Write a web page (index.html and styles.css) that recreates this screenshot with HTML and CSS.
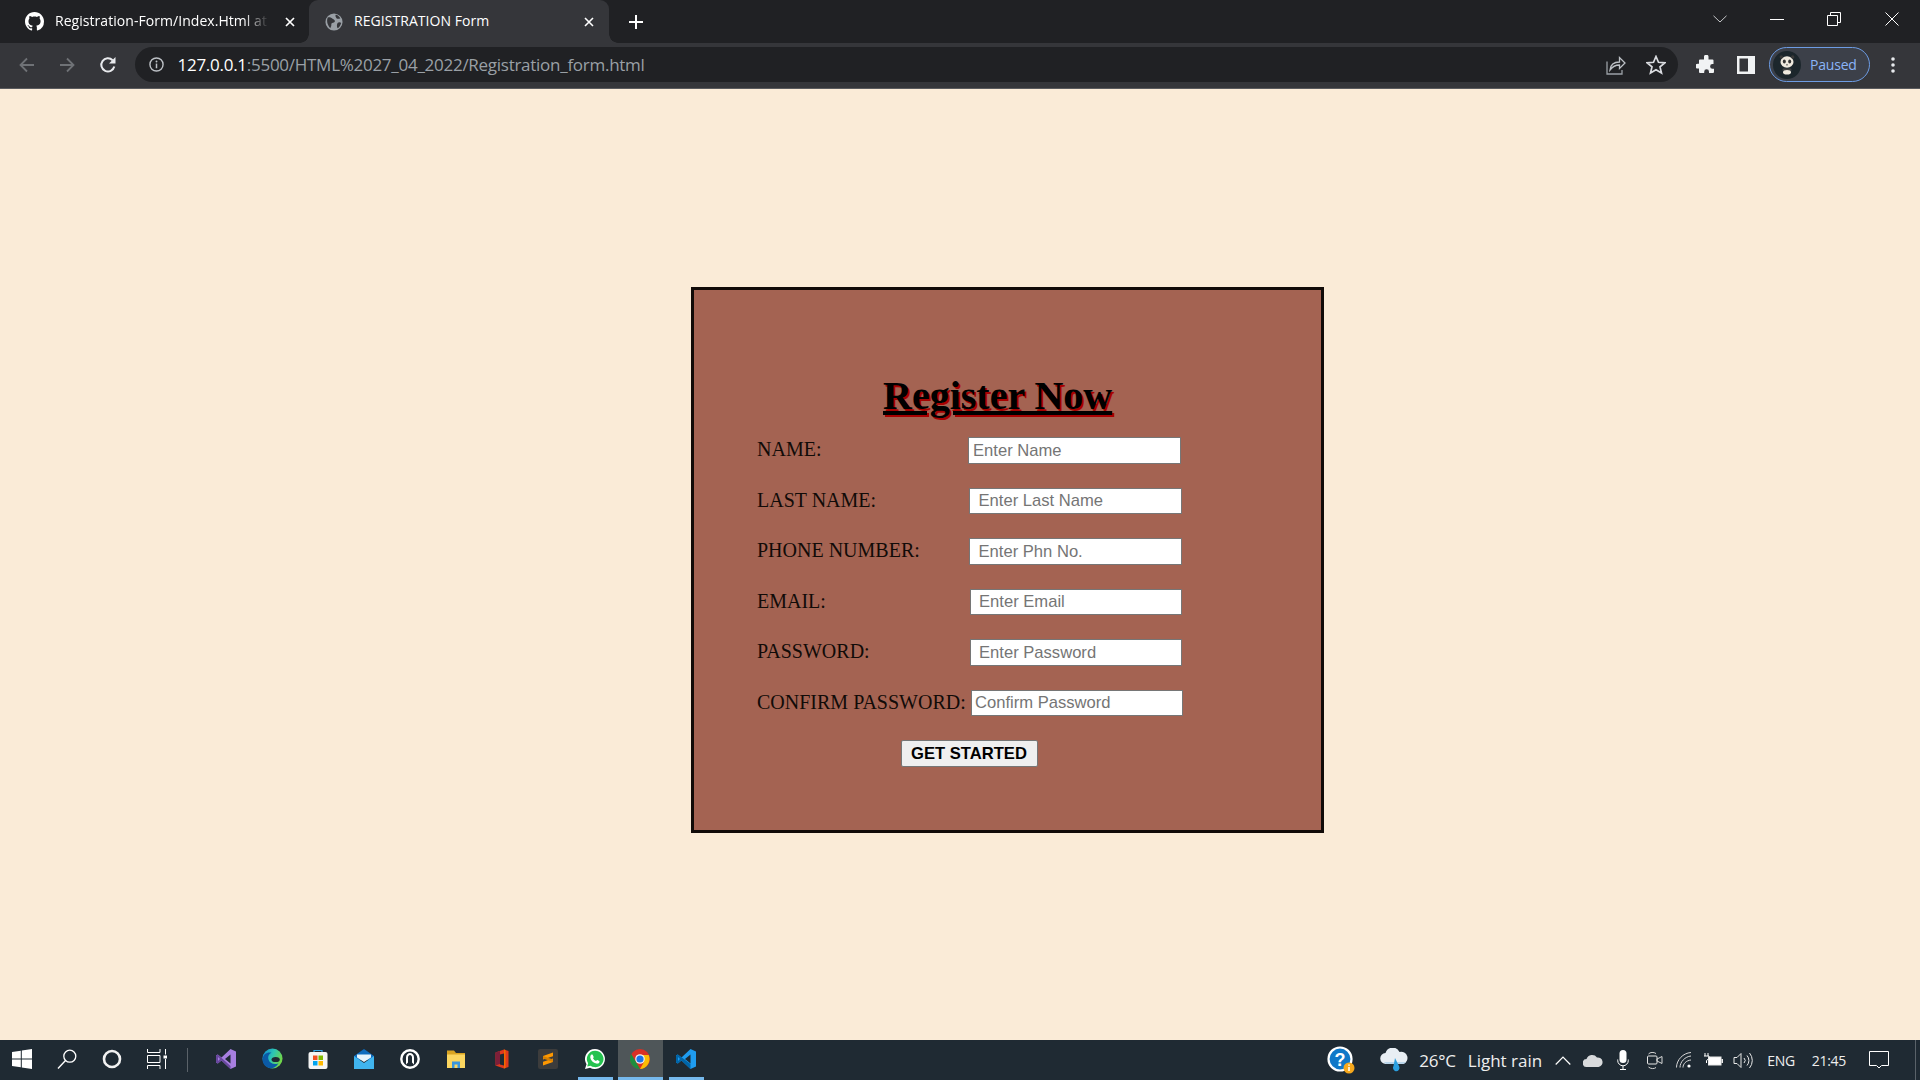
FILE: index.html
```html
<!DOCTYPE html>
<html lang="en">
<head>
<meta charset="utf-8">
<title>REGISTRATION Form</title>
<link rel="stylesheet" href="styles.css">
</head>
<body>
<header class="chrome">
  <div class="tabstrip">
    <div class="tab tab-inactive">
      <svg class="fav" viewBox="0 0 16 16"><path fill="#fff" d="M8 0C3.58 0 0 3.58 0 8c0 3.54 2.29 6.53 5.47 7.59.4.07.55-.17.55-.38 0-.19-.01-.82-.01-1.49-2.01.37-2.53-.49-2.69-.94-.09-.23-.48-.94-.82-1.13-.28-.15-.68-.52-.01-.53.63-.01 1.08.58 1.23.82.72 1.21 1.87.87 2.33.66.07-.52.28-.87.51-1.07-1.78-.2-3.64-.89-3.64-3.95 0-.87.31-1.59.82-2.15-.08-.2-.36-1.02.08-2.12 0 0 .67-.21 2.2.82.64-.18 1.32-.27 2-.27.68 0 1.36.09 2 .27 1.53-1.04 2.2-.82 2.2-.82.44 1.1.16 1.92.08 2.12.51.56.82 1.27.82 2.15 0 3.07-1.87 3.75-3.65 3.95.29.25.54.73.54 1.48 0 1.07-.01 1.93-.01 2.2 0 .21.15.46.55.38A8.013 8.013 0 0016 8c0-4.42-3.58-8-8-8z"/></svg>
      <span class="tab-title fade">Registration-Form/Index.Html at</span>
      <svg class="tab-x" viewBox="0 0 10 10"><path d="M1 1l8 8M9 1l-8 8" stroke="#fff" stroke-width="1.7"/></svg>
    </div>
    <div class="tab tab-active">
      <svg class="fav fav-globe" viewBox="0 0 20 20"><circle cx="10" cy="10" r="9.5" fill="#9aa0a6"/><path fill="#35363a" d="M3 5c2-1 4 0 5 1s3 1 3 3-2 2-3 2-1 2-1 3-1 2-1 3C4 15 1 10 3 5zM12 2c2 0 4 2 5 4-2 0-3 1-4 0s-2-3-1-4zM14 11c1-1 3-1 4 0-1 3-2 5-4 6-1-2-1-4 0-6z"/></svg>
      <span class="tab-title">REGISTRATION Form</span>
      <svg class="tab-x" viewBox="0 0 10 10"><path d="M1 1l8 8M9 1l-8 8" stroke="#fff" stroke-width="1.6"/></svg>
    </div>
    <svg class="newtab" viewBox="0 0 14 14"><path d="M7 0v14M0 7h14" stroke="#fff" stroke-width="2"/></svg>
    <div class="winctl">
      <svg class="win-chev" viewBox="0 0 14 8"><path d="M.5.8L7 7l6.500-6.200" fill="none" stroke="#c4c6c8" stroke-width="1"/></svg>
      <svg class="win-min" viewBox="0 0 14 14"><path d="M0 7.500h14" stroke="#fff" stroke-width="1"/></svg>
      <svg class="win-res" viewBox="0 0 14 14"><path d="M.5 3.500h10v10H.5zM3.500 3.500v-3h10v10h-3" fill="none" stroke="#fff" stroke-width="1"/></svg>
      <svg class="win-close" viewBox="0 0 14 14"><path d="M.5.500l13 13M13.500.500l-13 13" stroke="#fff" stroke-width="1"/></svg>
    </div>
  </div>
  <div class="toolbar">
    <svg class="tb nav" viewBox="0 0 18 18"><path d="M16 9H2.500M9 2.500L2.500 9 9 15.500" fill="none" stroke="#6f7276" stroke-width="1.800"/></svg>
    <svg class="tb nav" viewBox="0 0 18 18"><path d="M2 9h13.500M9 2.500L15.500 9 9 15.500" fill="none" stroke="#6f7276" stroke-width="1.800"/></svg>
    <svg class="tb nav" viewBox="0 0 18 18"><path d="M15.300 10.500A6.600 6.600 0 1 1 13.600 4.200" fill="none" stroke="#e8eaed" stroke-width="2"/><path d="M16.500 1v6.500H10z" fill="#e8eaed"/></svg>
    <div class="omnibox">
      <svg class="info" viewBox="0 0 16 16"><circle cx="8" cy="8" r="7" fill="none" stroke="#bdc1c6" stroke-width="1.500"/><path d="M8 7v5" stroke="#bdc1c6" stroke-width="1.600"/><circle cx="8" cy="4.800" r="1" fill="#bdc1c6"/></svg>
      <div class="url"><span class="url-host">127.0.0.1</span>:5500/HTML%2027_04_2022/Registration_form.html</div>
      <svg class="share" viewBox="0 0 20 20"><path d="M1 6.500v12.500h15v-4" fill="none" stroke="#9aa0a6" stroke-width="1.300"/><path d="M4 15c.5-5 4-8 9.500-8V2.500L19 8l-5.500 5.500V10C9.500 10 6.500 11.500 4 15z" fill="none" stroke="#bdc1c6" stroke-width="1.300"/></svg>
      <svg class="star" viewBox="0 0 20 20"><path d="M10 1.500l2.500 5.800 6.300.5-4.800 4.100 1.500 6.100-5.500-3.300-5.500 3.300 1.500-6.100L1.200 7.800l6.300-.5z" fill="none" stroke="#dadce0" stroke-width="1.700"/></svg>
    </div>
    <svg class="puzzle" viewBox="0 0 20 20"><path fill="#f1f3f4" d="M8 1.500a2.300 2.300 0 0 1 4.500 0V4.500H16.500a1 1 0 0 1 1 1V9h-1a2.400 2.400 0 0 0 0 4.800h1.500V17a1 1 0 0 1-1 1H13v-1.300a2.400 2.400 0 0 0-4.800 0V18H4a1 1 0 0 1-1-1v-3.500H1.800a2.400 2.400 0 0 1 0-4.800H3V5.500a1 1 0 0 1 1-1h4z"/></svg>
    <svg class="sidepanel" viewBox="0 0 18 18"><path fill-rule="evenodd" fill="#f1f3f4" d="M0 0h18v18H0zM2.500 2.500V15.500H11V2.500z"/></svg>
    <div class="profile">
      <svg class="avatar" viewBox="0 0 28 28"><circle cx="14" cy="14" r="14" fill="#1c262c"/><ellipse cx="14" cy="11" rx="6.500" ry="5.800" fill="#efe9df"/><circle cx="8.300" cy="6" r="1.700" fill="#3a3a3a"/><circle cx="19.700" cy="6" r="1.700" fill="#3a3a3a"/><ellipse cx="11.300" cy="10.500" rx="1.500" ry="1.900" fill="#333"/><ellipse cx="16.700" cy="10.500" rx="1.500" ry="1.900" fill="#333"/><ellipse cx="14" cy="13.800" rx=".9" ry=".6" fill="#333"/><path d="M10 17.500h8l.8 2h-9.600z" fill="#444"/><ellipse cx="14" cy="21.300" rx="4" ry="2.300" fill="#efe9df"/></svg>
      <span class="profile-label">Paused</span>
    </div>
    <svg class="kebab" viewBox="0 0 4 16"><circle cx="2" cy="2" r="1.800" fill="#e8eaed"/><circle cx="2" cy="8" r="1.800" fill="#e8eaed"/><circle cx="2" cy="14" r="1.800" fill="#e8eaed"/></svg>
  </div>
</header>

<main class="page">
  <form class="card">
    <h1 class="title">Register Now</h1>
    <div class="fields">
      <label class="row"><span class="lbl">NAME:</span><input class="inp" type="text" placeholder="Enter Name"></label>
      <label class="row"><span class="lbl">LAST NAME:</span><input class="inp shift-1 pad-wide" type="text" placeholder="Enter Last Name"></label>
      <label class="row"><span class="lbl">PHONE NUMBER:</span><input class="inp shift-1 pad-wide" type="text" placeholder="Enter Phn No."></label>
      <label class="row"><span class="lbl">EMAIL:</span><input class="inp shift-2 pad-wide" type="text" placeholder="Enter Email"></label>
      <label class="row"><span class="lbl">PASSWORD:</span><input class="inp shift-2 pad-wide" type="text" placeholder="Enter Password"></label>
      <label class="row"><span class="lbl">CONFIRM PASSWORD:</span><input class="inp shift-3" type="text" placeholder="Confirm Password"></label>
      <button class="submit" type="button">GET STARTED</button>
    </div>
  </form>
</main>

<footer class="taskbar">
  <div class="tb-slot tb-sys tb-start"><svg class="ic20" viewBox="0 0 20 20"><path fill="#fff" d="M0 3l8.800-1.300v7.800H0zM9.800 1.500L20 0v9.500H9.800zM0 10.500h8.800v7.800L0 17zM9.800 10.500H20V20L9.800 18.500z"/></svg></div>
  <div class="tb-slot tb-sys"><svg class="ic20" viewBox="0 0 20 20"><circle cx="12.800" cy="7.200" r="6" fill="none" stroke="#fff" stroke-width="1.300"/><path d="M8.500 11.500L1 19.500" stroke="#fff" stroke-width="1.300"/></svg></div>
  <div class="tb-slot tb-sys"><svg class="ic20" viewBox="0 0 20 20"><circle cx="10" cy="10" r="8" fill="none" stroke="#f2f2f2" stroke-width="2.600"/></svg></div>
  <div class="tb-slot tb-sys"><svg class="ic20" viewBox="0 0 20 20"><path d="M.5 0v3.500h12.500V0M.5 6.500h12.500v7H.5zM.5 20v-3.500h12.500V20M18.500 0v5.500M18.500 10v10" fill="none" stroke="#fff" stroke-width="1"/><rect x="16.500" y="6.500" width="4" height="3" fill="#fff"/></svg></div>
  <div class="tb-sep"></div>

  <div class="tb-slot"><svg class="ic20" viewBox="0 0 20 20"><path fill="#a77fe0" d="M14.500 0L20 2.500v15L14.500 20 5.500 11.500 1.800 14.500 0 13.500V6.500l1.800-1 3.700 3zM14.500 5.500L9 10l5.500 4.500z"/><path fill="#68479e" d="M0 6.500l1.800-1L14.500 17v3L5.500 11.500 1.800 14.500 0 13.500zM2 8v4l2-2z"/></svg></div>
  <div class="tb-slot"><svg class="ic22" viewBox="0 0 22 22"><defs><linearGradient id="edgeA" x1="0" y1="0" x2="1" y2="0.400"><stop offset="0" stop-color="#0f86d6"/><stop offset=".55" stop-color="#2cc6b4"/><stop offset="1" stop-color="#6fd54a"/></linearGradient></defs><circle cx="11" cy="11" r="10.500" fill="url(#edgeA)"/><path fill="#0b5aa6" d="M.6 12C.8 6.500 5.500 4 10 5c-3 1.300-4.200 4-3.200 7 1.200 4 6 6.200 10.500 4C14.500 21 9.500 22.300 6 20.500 3 19 .5 16 .6 12z"/><ellipse cx="14.300" cy="12" rx="4.300" ry="2.700" fill="#1f2a33"/></svg></div>
  <div class="tb-slot"><svg class="ic20" viewBox="0 0 20 20"><path d="M6 3.500V1.500h8v2" fill="none" stroke="#35a9e8" stroke-width="1.200"/><rect x="0.500" y="3" width="19" height="17" rx="2" fill="#f4f4f4"/><rect x="5" y="6.500" width="4.500" height="4.500" fill="#f25022"/><rect x="10.500" y="6.500" width="4.500" height="4.500" fill="#7fba00"/><rect x="5" y="12" width="4.500" height="4.500" fill="#00a4ef"/><rect x="10.500" y="12" width="4.500" height="4.500" fill="#ffb900"/></svg></div>
  <div class="tb-slot"><svg class="ic20" viewBox="0 0 20 20"><path fill="#0f6cbd" d="M10 0L0 7v4h20V7z"/><path fill="#e6f3fb" d="M3 5.500h14v3L10 13 3 8.500z"/><path fill="#40b4ee" d="M0 7l10 7 10-7v13H0z"/></svg></div>
  <div class="tb-slot"><svg class="ic20" viewBox="0 0 20 20"><circle cx="10" cy="10" r="8.700" fill="#1f2a33" stroke="#fff" stroke-width="2.400"/><path d="M6 15.500V8.500C6 5.500 8 4 10 4s4 1.500 4 4.500v7l-2-2V8.500c0-1.500-1-2.500-2-2.500S8 7 8 8.500v5z" fill="#fff"/></svg></div>
  <div class="tb-slot"><svg class="ic20" viewBox="0 0 20 20"><path fill="#d9a422" d="M1 1.500h7L10 4h9v3H1z"/><path fill="#fbd660" d="M1 5.500h18V19H1z"/><path fill="#3a96dd" d="M6 12.500h8V19h-2.500v-3.500h-3V19H6z"/></svg></div>
  <div class="tb-slot"><svg class="ic20" viewBox="0 0 20 20"><path fill="#e0391c" d="M3.500 3.500L12 .5l4.500 1.500v16l-4.500 1.500-8.500-3z"/><path fill="#7d1f3a" d="M3.500 3.500L8 2v13l-4.500 1.500z"/><path fill="#1f2a33" d="M8 5.500l4-1v12l-4-1z"/><path fill="#ef6c00" d="M12 .5l1.500.5V19l-1.500.5z"/></svg></div>
  <div class="tb-slot"><svg class="ic20" viewBox="0 0 20 20"><rect width="20" height="20" rx="2" fill="#3c3c3c"/><path fill="#ff9800" d="M15 3.500v3.700L5 10.500V7zM15 9.500v3.500L5 16.500v-3.700z"/><path fill="#d67f00" d="M5 7l10 3.500v2.500L5 9.500z"/></svg></div>
  <div class="tb-slot is-running is-first"><svg class="ic20" viewBox="0 0 20 20"><path fill="#fff" d="M10 0a10 10 0 0 0-8.500 15.200L0 20l5-1.300A10 10 0 1 0 10 0z"/><path fill="#25c250" d="M10 1.800a8.200 8.200 0 0 0-6.900 12.500l-.9 3.300 3.400-.9A8.200 8.200 0 1 0 10 1.800z"/><path fill="#fff" d="M6.800 5.500c.5 0 .8 0 1 .5l.9 2c0 .4-.5 1-.7 1.300.7 1.300 1.700 2.200 3 2.800.4-.3.900-1 1.300-1l2 1c.3.200.2.900 0 1.400-.5 1-2 1.400-3 1.100-3-.8-5.500-3.200-6-5.900-.2-1.300.5-3.200 1.500-3.200z"/></svg></div>
  <div class="tb-slot is-running is-active"><svg class="ic20" viewBox="0 0 20 20"><circle cx="10" cy="10" r="10" fill="#d93025"/><path fill="#1e8e3e" d="M1.300 5L6 13l4 7A10 10 0 0 1 1.300 5z"/><path fill="#fbbc04" d="M10 6h8.700A10 10 0 0 1 10 20l4-7z"/><circle cx="10" cy="10" r="4.800" fill="#f1f3f4"/><circle cx="10" cy="10" r="3.600" fill="#1a73e8"/></svg></div>
  <div class="tb-slot is-running"><svg class="ic20" viewBox="0 0 20 20"><path fill="#1f9cf0" d="M14.500 0L20 2.500v15L14.500 20 5.500 11.500 1.800 14.500 0 13.500V6.500l1.800-1 3.700 3zM14.500 5.500L9 10l5.500 4.500z"/><path fill="#0065a9" d="M0 6.500l1.800-1L14.500 15v5L5.500 11.500 1.800 14.500 0 13.500zM2 8v4l2-2z"/></svg></div>

  <div class="tray">
    <svg class="tray-help" viewBox="0 0 28 28"><circle cx="13" cy="13" r="11.500" fill="#1078c8" stroke="#fff" stroke-width="2.200"/><text class="help-q" x="13" y="19.500" text-anchor="middle">?</text><circle cx="22" cy="22" r="5.500" fill="#f6a81c"/><path d="M22 21v4M22 18.500v1.200" stroke="#fff" stroke-width="1.500"/></svg>
    <svg class="tray-cloud" viewBox="0 0 29 24"><path fill="#e8eef4" d="M6 16a5.500 5.500 0 0 1-.5-11A7.500 7.500 0 0 1 19.500 4 6 6 0 0 1 23 16z"/><path fill="#b9d5ea" d="M4 14h22a6 6 0 0 1-3 2H6a6 6 0 0 1-2-2z"/><path fill="#2a9fe0" d="M15 10l4 8a3.400 3.400 0 0 1-4 5 3.500 3.500 0 0 1-1.500-5z"/></svg>
    <span class="weather">26°C</span>
    <span class="weather weather-desc">Light rain</span>
    <svg class="tray-chev" viewBox="0 0 16 9"><path d="M.7 8.500L8 1l7.300 7.500" fill="none" stroke="#fff" stroke-width="1.200"/></svg>
    <svg class="tray-od" viewBox="0 0 20 13"><path fill="#d8dadc" d="M4 13a4 4 0 0 1-.5-8A6 6 0 0 1 14 3.500a4.800 4.800 0 0 1 1.500 9.500z"/></svg>
    <svg class="tray-mic" viewBox="0 0 12 20"><rect x="2.500" y="0" width="7" height="13" rx="3.500" fill="#fff"/><path d="M.7 9.500v1a5.300 5.300 0 0 0 10.600 0v-1M6 16v3.500M3 19.500h6" fill="none" stroke="#fff" stroke-width="1"/></svg>
    <svg class="tray-meet" viewBox="0 0 16 19"><rect x=".5" y="5" width="9.500" height="8" rx="1" fill="none" stroke="#e8e8e8" stroke-width="1"/><path d="M10 8l5-2.500v7L10 10zM1.500 3C3 1 7 1 9 2.500M1.500 16c2 2 6 2 7.500.5" fill="none" stroke="#d8d8d8" stroke-width="1"/></svg>
    <svg class="tray-wifi" viewBox="0 0 16 16"><path d="M.5 15.500C.5 8 7 1 15 .5M4 15.500C4 10 9 4.500 15 4M7 15.500c0-3.500 3-7 8-7.500" fill="none" stroke="#d8d8d8" stroke-width="1"/><circle cx="13" cy="14" r="1.600" fill="#fff"/></svg>
    <svg class="tray-batt" viewBox="0 0 20 14"><path d="M2 0v3M5 0v3M1 3h5v2.500L3.500 7.500V10" fill="none" stroke="#fff" stroke-width="1"/><rect x="5.500" y="4" width="12.500" height="8" fill="#fff" stroke="#e8e8e8"/><rect x="18.500" y="6" width="1.500" height="4" fill="#e8e8e8"/></svg>
    <svg class="tray-vol" viewBox="0 0 20 17"><path d="M1 5.500h3L8 1.500v14l-4-4H1z" fill="none" stroke="#e8e8e8" stroke-width="1"/><path d="M11 6a3.500 3.500 0 0 1 0 5M14 3.500a7.500 7.500 0 0 1 0 10M16.500 1a11.500 11.500 0 0 1 0 15" fill="none" stroke="#e8e8e8" stroke-width="1"/></svg>
    <span class="tray-text tray-eng">ENG</span>
    <span class="tray-text tray-time">21:45</span>
    <svg class="tray-note" viewBox="0 0 20 18"><path d="M.5.500h19v14h-7L10 17l-2.500-2.500h-7z" fill="none" stroke="#fff" stroke-width="1"/></svg>
    <div class="tray-edge"></div>
  </div>
</footer>
</body>
</html>
```
FILE: styles.css
```css
* { box-sizing: border-box; }
html, body { margin: 0; height: 100%; }
body {
  display: flex;
  flex-direction: column;
  height: 100vh;
  overflow: hidden;
  background: #faebd7;
  font-family: "Liberation Serif", serif;
}
svg { display: block; flex: none; }

/* Browser frame */
.chrome { flex: none; font-family: "Open Sans", "Noto Sans", sans-serif; }
.tabstrip {
  display: flex;
  align-items: stretch;
  height: 43px;
  background: #202124;
}
.tab {
  position: relative;
  display: flex;
  align-items: center;
  width: 300px;
  color: #fff;
  font-size: 14px;
}
.tab-inactive { width: 309px; padding-left: 25px; padding-right: 13px; }
.tab-active {
  background: #35363a;
  border-radius: 9px 9px 0 0;
  padding-left: 16px;
  padding-right: 14px;
}
.tab-active::before, .tab-active::after {
  content: "";
  position: absolute;
  bottom: 0;
  width: 9px;
  height: 9px;
}
.tab-active::before { left: -9px; background: radial-gradient(circle at 0 0, #202124 8.500px, #35363a 9px); }
.tab-active::after { right: -9px; background: radial-gradient(circle at 100% 0, #202124 8.500px, #35363a 9px); }
.fav { width: 19px; height: 19px; }
.fav-globe { width: 18px; height: 18px; }
.tab-title { margin-left: 11px; padding-bottom: 2px; flex: 1; white-space: nowrap; letter-spacing: 0.05px; }
.fade { -webkit-mask-image: linear-gradient(90deg, #000 88%, transparent 100%); mask-image: linear-gradient(90deg, #000 88%, transparent 100%); }
.tab-x { width: 10px; height: 10px; margin-left: 12px; margin-right: 1px; }
.tab-inactive .tab-x { margin-left: 16px; }
.newtab { width: 14px; height: 14px; align-self: center; margin-left: 20px; }
.winctl { margin-left: auto; display: flex; align-items: center; height: 37px; }
.win-chev { width: 14px; height: 8px; margin-right: 43px; }
.win-min { width: 14px; height: 14px; margin-right: 43px; }
.win-res { width: 14px; height: 14px; margin-right: 44px; }
.win-close { width: 14px; height: 14px; margin-right: 21px; }

.toolbar {
  display: flex;
  align-items: center;
  height: 46px;
  background: #35363a;
  border-bottom: 1px solid #5a5b5e;
  padding-left: 18px;
  padding-bottom: 2px;
}
.tb { width: 18px; height: 18px; }
.nav { margin-right: 22px; }
.toolbar .nav:nth-child(2) { margin-right: 23px; }
.toolbar .nav:nth-child(3) { margin-right: 18px; }
.omnibox {
  display: flex;
  align-items: center;
  width: 1543px;
  height: 35px;
  border-radius: 18px;
  background: #202124;
  padding-left: 14px;
}
.info { width: 15px; height: 15px; }
.url {
  margin-left: 13.500px;
  font-size: 17px;
  letter-spacing: -0.27px;
  color: #9aa0a6;
  white-space: nowrap;
  flex: 1;
}
.url-host { color: #fff; }
.share { width: 20px; height: 20px; margin-right: 20px; }
.star { width: 20px; height: 20px; margin-right: 12px; }
.puzzle { width: 20px; height: 20px; margin-left: 18px; }
.sidepanel { width: 18px; height: 18px; margin-left: 21px; }
.profile {
  display: flex;
  align-items: center;
  width: 101px;
  height: 35px;
  margin-left: 14px;
  border: 1.300px solid #6d9ce4;
  border-radius: 18px;
  background: #3c4049;
  padding-left: 3px;
}
.avatar { width: 28px; height: 28px; }
.profile-label { margin-left: 9px; font-size: 14px; letter-spacing: -0.2px; color: #8ab4f8; }
.kebab { width: 4px; height: 16px; margin-left: 21px; }

/* Page */
.page { flex: 1; min-height: 0; padding: 198px 0 0 691px; }
.card {
  width: 633px;
  border: 3px solid #110b08;
  background: #a46352;
  padding: 83px 0 63px 63px;
}
.title {
  margin: 0 0 18.400px;
  padding-left: 126px;
  font-size: 40px;
  font-weight: bold;
  line-height: 46px;
  color: #000;
  text-decoration: underline;
  text-shadow: 2px 2px #a80000;
}
.fields { display: flex; flex-direction: column; gap: 24px; align-items: flex-start; }
.row { display: grid; grid-template-columns: 211px auto; align-items: center; }
.lbl { padding-bottom: 1.400px; font-size: 20px; color: #110b08; white-space: nowrap; }
.inp {
  width: 212.500px;
  height: 26.500px;
  border: 1px solid #767676;
  border-radius: 0;
  background: #fff;
  padding: 1px 4px;
  font-family: "Liberation Sans", Arial, sans-serif;
  font-size: 16.600px;
}
.inp::placeholder { color: #757575; opacity: 1; }
.pad-wide { padding-left: 8.500px; }
.shift-1 { margin-left: 1px; }
.shift-2 { margin-left: 1.500px; }
.shift-3 { margin-left: 2.500px; padding-left: 3.500px; }
.submit {
  width: 137px;
  height: 27px;
  margin-left: 143.500px;
  border: 1px solid #767676;
  border-radius: 2px;
  background: #efefef;
  padding: 0;
  color: #000;
  font-family: "Liberation Sans", Arial, sans-serif;
  font-size: 16.600px;
  font-weight: bold;
}

/* Windows taskbar */
.taskbar {
  flex: none;
  display: flex;
  align-items: stretch;
  height: 40px;
  background: #1f2a33;
  font-family: "Open Sans", "Noto Sans", sans-serif;
  color: #eee;
}
.tb-slot {
  display: flex;
  align-items: center;
  justify-content: center;
  width: 46px;
  border-bottom: 3px solid transparent;
}
.tb-sys { width: 45px; }
.tb-start { width: 44px; }
.tb-sep { width: 2px; height: 24px; align-self: center; margin: 0 14px 0 8px; border-left: 1px solid #5a6269; }
.is-running { border-bottom-color: #76b9ed; margin: 0 5.500px 0; width: 35px; padding-right: 1px; }
.is-first { margin-left: 6.500px; }
.is-active { width: 45px; margin: 0; background: #4f5659; }
.ic20 { width: 20px; height: 20px; }
.ic22 { width: 21px; height: 21px; }

.tray { margin-left: auto; display: flex; align-items: center; }
.tray-help { width: 28px; height: 28px; margin-right: 25px; }
.tray-cloud { width: 29px; height: 24px; margin-right: 10px; }
.weather { font-size: 17px; letter-spacing: -0.2px; white-space: nowrap; }
.weather-desc { margin-left: 12px; letter-spacing: 0; }
.help-q { font: bold 18px "Liberation Sans", sans-serif; fill: #fff; }
.tray-chev { width: 16px; height: 9px; margin-left: 13px; }
.tray-od { width: 20px; height: 13px; margin-left: 12px; }
.tray-mic { width: 12px; height: 20px; margin-left: 14px; }
.tray-meet { width: 16px; height: 19px; margin-left: 18px; }
.tray-wifi { width: 16px; height: 16px; margin-left: 13px; }
.tray-batt { width: 20px; height: 14px; margin-left: 11px; }
.tray-vol { width: 20px; height: 17px; margin-left: 10px; }
.tray-text { font-size: 14px; letter-spacing: -0.3px; white-space: nowrap; }
.tray-eng { margin-left: 14px; }
.tray-time { margin-left: 17px; }
.tray-note { width: 20px; height: 18px; margin-left: 23px; }
.tray-edge { width: 1px; height: 40px; margin-left: 26px; margin-right: 4px; background: #5a6269; }
```
